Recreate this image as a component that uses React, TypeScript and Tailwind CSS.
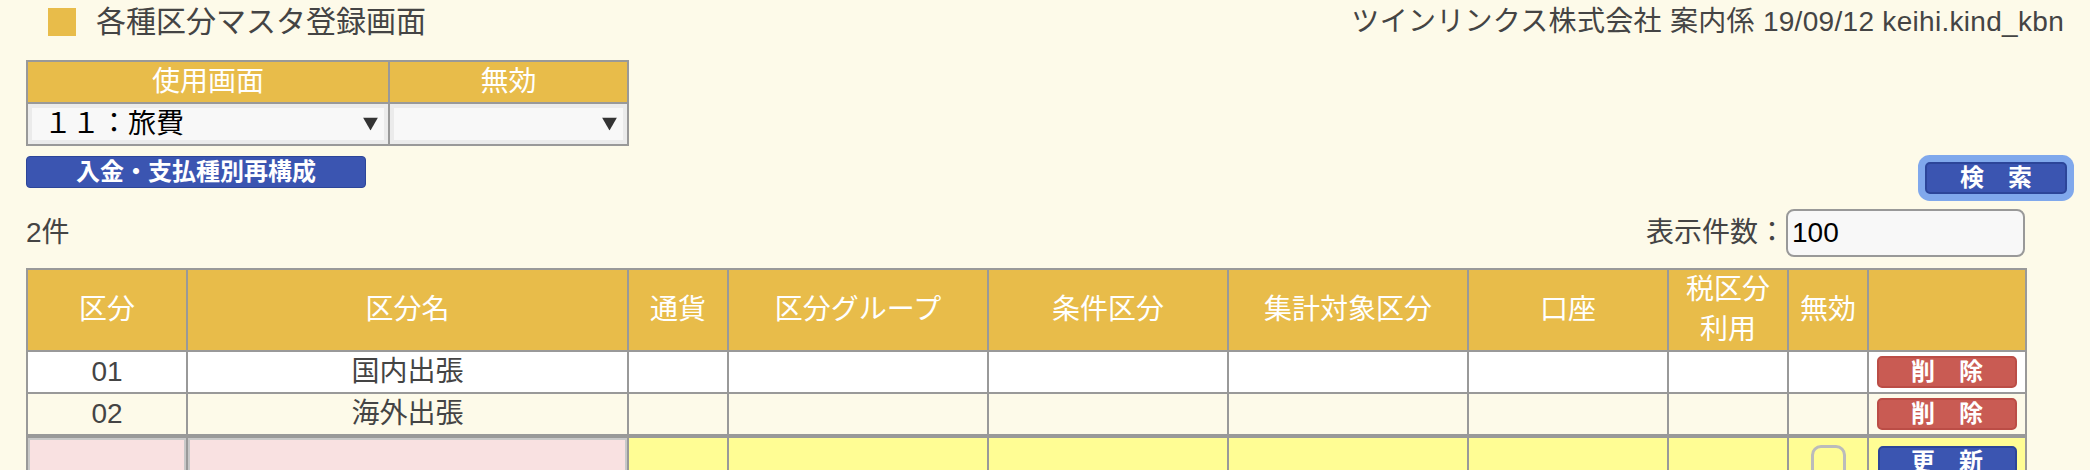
import React from "react";

const cols = [
  { label: "区分", w: "w-[160px]" },
  { label: "区分名", w: "w-[441px]" },
  { label: "通貨", w: "w-[100px]" },
  { label: "区分グループ", w: "w-[260px]" },
  { label: "条件区分", w: "w-[240px]" },
  { label: "集計対象区分", w: "w-[240px]" },
  { label: "口座", w: "w-[200px]" },
  { label: "税区分利用", w: "w-[120px]" },
  { label: "無効", w: "w-[80px]" },
  { label: "", w: "w-[158px]" },
];

const rows = [
  { code: "01", name: "国内出張", bg: "bg-white", last: false },
  { code: "02", name: "海外出張", bg: "bg-[#fdfae9]", last: true },
];

function Arrow() {
  return (
    <svg
      className="pointer-events-none absolute right-[10px] top-1/2 -translate-y-1/2"
      width="15"
      height="13"
      viewBox="0 0 15 13"
    >
      <polygon points="0,0 15,0 7.5,13" fill="#333" />
    </svg>
  );
}

export default function App() {
  return (
    <div className="min-h-screen bg-[#fdfae9] text-[#444] font-['Liberation_Sans','Noto_Sans_CJK_JP',sans-serif]">
      {/* Header */}
      <div className="flex h-[44px] items-center justify-between pl-[48px] pr-[26px]">
        <div className="flex items-center gap-[20px]">
          <span className="h-[28px] w-[28px] bg-[#e8bc4a]" />
          <h1 className="text-[30px] leading-none">各種区分マスタ登録画面</h1>
        </div>
        <div className="text-[28px] leading-none tracking-[0.3px]">
          ツインリンクス株式会社 案内係 19/09/12 keihi.kind_kbn
        </div>
      </div>

      {/* Filter */}
      <div className="pl-[26px] pt-[16px]">
        <table className="w-[603px] table-fixed border-separate border-spacing-0 border-l-2 border-t-2 border-[#999]">
          <colgroup>
            <col className="w-[362px]" />
            <col className="w-[239px]" />
          </colgroup>
          <thead>
            <tr>
              <th className="h-[42px] border-b-2 border-r-2 border-[#999] bg-[#e8bc4a] text-[28px] font-normal leading-none text-white">
                使用画面
              </th>
              <th className="h-[42px] border-b-2 border-r-2 border-[#999] bg-[#e8bc4a] text-[28px] font-normal leading-none text-white">
                無効
              </th>
            </tr>
          </thead>
          <tbody>
            <tr>
              <td className="h-[42px] border-b-2 border-r-2 border-[#999] p-0">
                <div className="relative h-[40px]">
                  <select
                    defaultValue="11"
                    className="h-full w-full appearance-none border-4 border-[#ebebeb] bg-[#f8f8f8] pl-[12px] text-[28px] leading-none text-black outline-none"
                  >
                    <option value="11">１１：旅費</option>
                  </select>
                  <Arrow />
                </div>
              </td>
              <td className="h-[42px] border-b-2 border-r-2 border-[#999] p-0">
                <div className="relative h-[40px]">
                  <select
                    defaultValue=""
                    className="h-full w-full appearance-none border-4 border-[#ebebeb] bg-[#f8f8f8] pl-[12px] text-[28px] leading-none text-black outline-none"
                  >
                    <option value=""></option>
                  </select>
                  <Arrow />
                </div>
              </td>
            </tr>
          </tbody>
        </table>
      </div>

      {/* Buttons */}
      <div className="mt-[10px] flex items-start justify-between pl-[26px] pr-[23px]">
        <button className="h-[32px] w-[340px] rounded-[4px] border border-[#2c4599] bg-[#3b55b1] text-[24px] font-bold leading-none text-white">
          入金・支払種別再構成
        </button>
        <button className="mt-[6px] h-[32px] w-[142px] rounded-[5px] border-2 border-[#2c4599] bg-[#3b55b1] text-[24px] font-bold leading-none text-white ring-[7px] ring-[#80a8ec]">
          検　索
        </button>
      </div>

      {/* Count row */}
      <div className="ml-[26px] mt-[15px] flex h-[48px] w-[1999px] items-center justify-between">
        <span className="text-[28px] leading-none">2件</span>
        <div className="flex items-center">
          <span className="text-[28px] leading-none">表示件数：</span>
          <input
            readOnly
            value="100"
            className="h-[48px] w-[239px] rounded-[8px] border-2 border-[#999] bg-[#f8f8f8] pl-[4px] text-[28px] text-black outline-none"
          />
        </div>
      </div>

      {/* Main table */}
      <div className="mt-[11px] pl-[26px]">
        <table className="w-[2001px] table-fixed border-separate border-spacing-0 border-l-2 border-t-2 border-[#999]">
          <colgroup>
            {cols.map((c, i) => (
              <col key={i} className={c.w} />
            ))}
          </colgroup>
          <thead>
            <tr>
              {cols.map((c, i) => (
                <th
                  key={i}
                  className="h-[82px] border-b-2 border-r-2 border-[#999] bg-[#e8bc4a] text-[28px] font-normal leading-[40px] text-white"
                >
                  {c.label === "税区分利用" ? (
                    <>
                      税区分
                      <br />
                      利用
                    </>
                  ) : (
                    c.label
                  )}
                </th>
              ))}
            </tr>
          </thead>
          <tbody>
            {rows.map((r) => (
              <tr key={r.code} className={r.bg}>
                {cols.map((c, i) => (
                  <td
                    key={i}
                    className={
                      r.last
                        ? "h-[44px] border-b-4 border-r-2 border-[#999] p-0 text-center text-[28px] leading-none"
                        : "h-[42px] border-b-2 border-r-2 border-[#999] p-0 text-center text-[28px] leading-none"
                    }
                  >
                    {i === 0 && r.code}
                    {i === 1 && r.name}
                    {i === 9 && (
                      <button className="h-[32px] w-[140px] rounded-[5px] border-2 border-[#bb4d46] bg-[#c95b53] text-[24px] font-bold leading-none text-white">
                        削　除
                      </button>
                    )}
                  </td>
                ))}
              </tr>
            ))}
            <tr className="bg-[#fffd94]">
              {cols.map((c, i) => (
                <td key={i} className="h-[50px] border-b-2 border-r-2 border-[#999] p-0 text-center">
                  {(i === 0 || i === 1) && (
                    <input className="block h-[48px] w-full border-2 border-[#c8c8c8] bg-[#f9e1e1] outline-none" />
                  )}
                  {i === 8 && (
                    <input
                      type="checkbox"
                      className="h-[35px] w-[35px] appearance-none rounded-[10px] border-[3px] border-[#bbb] align-middle"
                    />
                  )}
                  {i === 9 && (
                    <button className="h-[32px] w-[139px] rounded-[5px] border-2 border-[#2c4599] bg-[#3b55b1] text-[24px] font-bold leading-none text-white">
                      更　新
                    </button>
                  )}
                </td>
              ))}
            </tr>
          </tbody>
        </table>
      </div>
    </div>
  );
}
